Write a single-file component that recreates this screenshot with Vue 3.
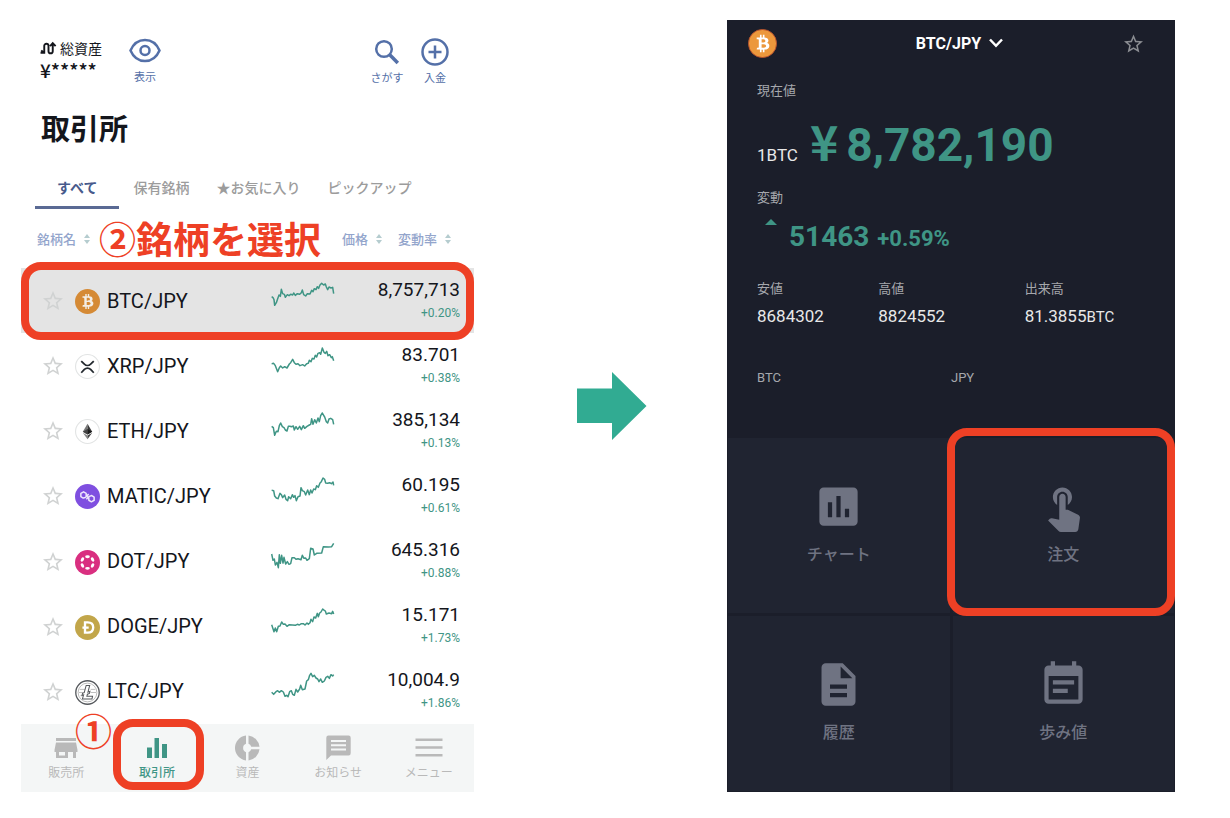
<script setup>
const tabs = ['すべて', '保有銘柄', '★お気に入り', 'ピックアップ']

const rows = [
  { coin: 'btc', pair: 'BTC/JPY', price: '8,757,713', change: '+0.20%', top: 45,
    line: '35,95 39,98 42,104 44,121 49,113 52,104 57,90 61,94 64,73 68,86 73,88 76,97 82,89 87,92 92,88 98,90 101,84 106,91 112,86 119,88 124,83 127,75 131,89 137,93 142,86 150,87 155,76 159,80 163,71 168,74 172,65 176,70 180,60 185,55 191,60 196,57 199,66 203,74 207,66 213,69 218,67 221,86' },
  { coin: 'xrp', pair: 'XRP/JPY', price: '83.701', change: '+0.38%', top: 241,
    line: '35,297 41,296 46,303 53,321 58,309 62,304 68,310 74,306 81,310 88,298 92,294 98,284 103,294 108,299 114,297 120,303 128,300 134,304 140,297 145,296 148,287 153,291 157,281 162,283 166,272 170,277 174,266 179,264 182,269 187,250 192,263 196,266 200,260 204,273 209,270 214,279 217,276 221,288' },
  { coin: 'eth', pair: 'ETH/JPY', price: '385,134', change: '+0.13%', top: 437,
    line: '35,486 40,490 44,513 49,501 54,502 58,484 62,476 67,487 72,490 76,497 81,500 85,486 90,486 94,487 100,485 103,497 108,487 113,495 119,486 124,496 130,484 134,492 141,486 148,482 152,480 155,463 159,480 164,466 169,476 174,461 178,472 182,454 187,446 191,453 194,458 199,472 203,476 207,464 212,462 218,466 221,480' },
  { coin: 'matic', pair: 'MATIC/JPY', price: '60.195', change: '+0.61%', top: 47,
    line: '35,93 41,94 44,110 49,116 54,118 60,102 64,106 68,115 74,107 78,120 83,124 86,112 92,118 97,106 101,114 105,109 109,124 114,112 120,110 123,85 127,94 133,97 137,107 143,92 148,106 152,92 156,101 161,89 166,91 170,79 175,84 180,71 184,67 189,56 194,60 197,71 203,72 209,70 214,73 219,68 221,78' },
  { coin: 'dot', pair: 'DOT/JPY', price: '645.316', change: '+0.88%', top: 243,
    line: '35,282 39,301 43,297 46,315 51,307 55,323 58,284 61,310 65,286 69,309 72,292 77,312 82,305 87,313 92,311 96,293 103,293 108,298 114,296 123,299 127,286 132,295 137,294 141,301 148,296 152,265 159,267 163,285 170,280 185,279 190,260 205,261 215,260 221,250' },
  { coin: 'doge', pair: 'DOGE/JPY', price: '15.171', change: '+1.73%', top: 439,
    line: '35,495 39,507 42,516 46,505 50,516 55,500 60,499 65,487 70,494 75,493 81,500 88,495 97,496 106,497 112,494 118,496 124,492 130,492 135,496 141,490 145,494 150,489 153,479 158,486 162,472 167,475 172,461 175,471 179,460 183,457 188,448 193,452 196,454 199,463 207,460 215,462 218,455 221,463' },
  { coin: 'ltc', pair: 'LTC/JPY', price: '10,004.9', change: '+1.86%', top: 635,
    line: '35,699 41,705 48,697 53,694 58,699 64,694 70,698 75,711 80,708 84,712 89,697 94,694 98,705 103,708 108,690 113,698 119,689 122,678 127,691 135,689 140,665 145,661 149,648 153,642 158,652 163,648 168,656 173,659 177,667 182,659 187,669 193,665 198,654 203,651 208,657 213,646 218,650 221,646' }
]

const nav = [
  { icon: 'shop', label: '販売所' },
  { icon: 'bars', label: '取引所' },
  { icon: 'pie', label: '資産' },
  { icon: 'news', label: 'お知らせ' },
  { icon: 'menu', label: 'メニュー' }
]

const stats = [
  { label: '安値', value: '8684302', unit: '' },
  { label: '高値', value: '8824552', unit: '' },
  { label: '出来高', value: '81.3855', unit: 'BTC' }
]

const tiles = [
  { label: 'チャート', d: 'M19 3H5c-1.1 0-2 .9-2 2v14c0 1.100.9 2 2 2h14c1.100 0 2-.9 2-2V5c0-1.100-.9-2-2-2zM9 17H7v-7h2v7zm4 0h-2V7h2v10zm4 0h-2v-4h2v4z' },
  { label: '注文', d: 'M9 11.240V7.500C9 6.120 10.120 5 11.500 5S14 6.120 14 7.500v3.740c1.210-.81 2-2.180 2-3.740C16 5.010 13.990 3 11.500 3S7 5.010 7 7.500c0 1.560.79 2.930 2 3.740zm9.840 4.630l-4.540-2.260c-.17-.07-.35-.11-.54-.11H13v-6c0-.83-.67-1.500-1.500-1.500S10 6.670 10 7.500v10.740l-3.430-.72c-.08-.01-.15-.03-.24-.03-.31 0-.59.13-.79.33l-.79.8 4.940 4.940c.27.27.65.44 1.060.44h6.790c.75 0 1.330-.55 1.440-1.280l.75-5.270c.01-.07.02-.14.02-.2 0-.62-.38-1.160-.91-1.380z' },
  { label: '履歴', d: 'M14 2H6c-1.100 0-1.990.9-1.990 2L4 20c0 1.100.89 2 1.990 2H18c1.100 0 2-.9 2-2V8l-6-6zm2 16H8v-2h8v2zm0-4H8v-2h8v2zm-3-5V3.500L18.500 9H13z' },
  { label: '歩み値', d: 'M17 10H7v2h10v-2zm2-7h-1V1h-2v2H8V1H6v2H5c-1.110 0-1.990.9-1.990 2L3 19c0 1.100.89 2 2 2h14c1.100 0 2-.9 2-2V5c0-1.100-.9-2-2-2zm0 16H5V8h14v11zm-5-5H7v2h7v-2z' }
]

const bitcoin = 'M23.189 14.02c.314-2.096-1.283-3.223-3.465-3.975l.708-2.84-1.728-.43-.69 2.765c-.454-.114-.92-.22-1.385-.326l.695-2.783L15.596 6l-.708 2.839c-.376-.086-.746-.17-1.104-.26l.002-.009-2.384-.595-.46 1.846s1.283.294 1.256.312c.7.175.826.638.805 1.006l-.806 3.235c.048.012.11.03.18.057l-.183-.045-1.13 4.532c-.086.212-.303.531-.793.41.018.025-1.256-.313-1.256-.313l-.858 1.978 2.25.561c.418.105.828.215 1.231.318l-.715 2.872 1.727.43.708-2.84c.472.127.93.245 1.378.357l-.706 2.828 1.728.43.715-2.866c2.948.558 5.164.333 6.097-2.333.752-2.146-.037-3.385-1.588-4.192 1.13-.26 1.98-1.003 2.207-2.538zm-3.95 5.538c-.533 2.147-4.148.986-5.32.695l.95-3.805c1.172.293 4.929.872 4.37 3.11zm.535-5.569c-.487 1.953-3.495.96-4.47.717l.86-3.45c.975.243 4.118.696 3.61 2.733z'
const star = 'M22 9.240l-7.190-.62L12 2 9.190 8.630 2 9.240l5.460 4.730L5.820 21 12 17.270 18.180 21l-1.630-7.030L22 9.240zM12 15.400l-3.760 2.270 1-4.280-3.320-2.880 4.380-.38L12 6.100l1.710 4.040 4.380.38-3.320 2.880 1 4.280L12 15.400z'
</script>

<template>
  <main class="page">
    <section class="phone market">
      <header class="top">
        <div class="assets">
          <p class="assets-label">
            <svg class="swap" viewBox="0 0 16 14" aria-hidden="true">
              <path d="M0.500 11h3.500V4.500a2 2 0 0 1 4 0v5a2 2 0 0 0 4 0V2.500M9.500 4.700l2.500-2.800 2.700 2.800M1.200 8.800L3.500 11" />
            </svg>
            <span>総資産</span>
          </p>
          <p class="assets-value">¥*****</p>
        </div>
        <button class="tool show" type="button">
          <svg viewBox="0 0 32 26" aria-hidden="true">
            <path d="M1.500 13C4.500 6 10 2.500 16 2.500S27.500 6 30.500 13C27.500 20 22 23.500 16 23.500S4.500 20 1.500 13z" />
            <circle cx="16" cy="13" r="4.500" />
          </svg>
          <span>表示</span>
        </button>
        <button class="tool" type="button">
          <svg viewBox="0 0 32 28" aria-hidden="true">
            <circle cx="13" cy="11" r="7.800" />
            <path d="M18.500 16.500l8.300 8.500" class="handle" />
          </svg>
          <span>さがす</span>
        </button>
        <button class="tool deposit" type="button">
          <svg viewBox="0 0 32 28" aria-hidden="true">
            <circle cx="16" cy="14" r="12.500" />
            <path d="M16 7.500v13M9.500 14h13" />
          </svg>
          <span>入金</span>
        </button>
      </header>

      <h1 class="title">取引所</h1>

      <div class="tabs" role="tablist">
        <button v-for="(t, i) in tabs" :key="t" class="tab" :class="{ active: i === 0 }" type="button" role="tab" :aria-selected="i === 0">{{ t }}</button>
      </div>

      <div class="list">
        <table>
          <colgroup>
            <col class="c-name" /><col class="c-line" /><col class="c-price" />
          </colgroup>
          <thead>
            <tr>
              <th class="h-name" colspan="2">
                <button class="sort" type="button">銘柄名
                  <svg viewBox="0 0 8 12" aria-hidden="true"><path d="M1 5l3-4 3 4zM1 7l3 4 3-4z" /></svg>
                </button>
              </th>
              <th>
                <div class="sorts">
                  <button class="sort" type="button">価格
                    <svg viewBox="0 0 8 12" aria-hidden="true"><path d="M1 5l3-4 3 4zM1 7l3 4 3-4z" /></svg>
                  </button>
                  <button class="sort" type="button">変動率
                    <svg viewBox="0 0 8 12" aria-hidden="true"><path d="M1 5l3-4 3 4zM1 7l3 4 3-4z" /></svg>
                  </button>
                </div>
              </th>
            </tr>
          </thead>
          <tbody>
            <tr v-for="(r, i) in rows" :key="r.pair" :class="{ selected: i === 0 }">
              <td>
                <div class="name">
                  <button class="fav" type="button" :aria-label="r.pair + ' お気に入り'">
                    <svg viewBox="2 2 20 19" aria-hidden="true"><path :d="star" /></svg>
                  </button>
                  <svg class="coin" viewBox="0 0 32 32" aria-hidden="true">
                    <g v-if="r.coin === 'btc'">
                      <circle cx="16" cy="16" r="16" fill="#d58a35" />
                      <path :d="bitcoin" fill="#f3eee6" transform="rotate(-14 16 16)" />
                    </g>
                    <g v-else-if="r.coin === 'xrp'" fill="none">
                      <circle cx="16" cy="16" r="15.300" stroke="#e2e4e4" stroke-width="1.400" />
                      <path d="M8 9l4 4c2.300 2.200 5.700 2.200 8 0l4-4M8 24l4-4.200c2.300-2.200 5.700-2.200 8 0l4 4.200" stroke="#23292f" stroke-width="2.300" />
                    </g>
                    <g v-else-if="r.coin === 'eth'">
                      <circle cx="16" cy="16" r="15.300" fill="#fff" stroke="#e2e4e4" stroke-width="1.400" />
                      <path d="M16 6l-6 10.200 6 3.500z" fill="#777" />
                      <path d="M16 6l6 10.200-6 3.500z" fill="#3a3a3a" />
                      <path d="M16 12.800l-6 3.400 6 3.500z" fill="#444" />
                      <path d="M16 12.800l6 3.400-6 3.500z" fill="#1c1c1c" />
                      <path d="M10 17.700l6 8.300v-4.800z" fill="#888" />
                      <path d="M22 17.700L16 26v-4.800z" fill="#444" />
                    </g>
                    <g v-else-if="r.coin === 'matic'">
                      <circle cx="16" cy="16" r="16" fill="#7f4fe0" />
                      <path d="M17.500 13L13 17.300L10.500 18L7.500 16.200V12L11 10L14.300 12V14.800L17.700 18.300V20.800L21 22.800L24.500 20.800V16.800L21.500 14.800L18.500 15.800L14.500 19.500" fill="none" stroke="#eee6fc" stroke-width="1.900" stroke-linejoin="round" />
                    </g>
                    <g v-else-if="r.coin === 'dot'">
                      <circle cx="16" cy="16" r="16" fill="#d92f80" />
                      <g fill="#fff">
                        <ellipse v-for="a in 6" :key="a" cx="16" cy="8.500" rx="3" ry="1.900" :transform="`rotate(${a * 60} 16 16)`" />
                      </g>
                    </g>
                    <g v-else-if="r.coin === 'doge'">
                      <circle cx="16" cy="16" r="16" fill="#c2a64a" />
                      <path d="M12.800 9.500h3.500c4.500 0 7 2.600 7 6.500s-2.500 6.600-7 6.600h-3.500zM9.500 16.200h8" fill="none" stroke="#fff" stroke-width="3" />
                    </g>
                    <g v-else fill="none" stroke="#55585c">
                      <circle cx="16" cy="16" r="15" stroke-width="1.700" />
                      <circle cx="16" cy="16" r="12" stroke="#aaa" stroke-width="1" />
                      <path d="M6 12h7M5 16h6M20 12h6M20 16h7M7 20h3" stroke="#bbb" stroke-width="1.200" />
                      <path d="M14.300 7h4.500l-2.200 8.500 2.500-1-.6 2.700-2.600 1-.7 2.600h7.300l-.8 3.500H9.500l1.500-5.300-2 .8.600-2.700 2.200-.9z" fill="#fff" stroke-width="1.300" />
                    </g>
                  </svg>
                  <span>{{ r.pair }}</span>
                </div>
              </td>
              <td>
                <svg class="spark" :viewBox="`33 ${r.top} 192 84`" aria-hidden="true"><polyline :points="r.line" /></svg>
              </td>
              <td class="quote">
                <span class="price">{{ r.price }}</span>
                <span class="change">{{ r.change }}</span>
              </td>
            </tr>
          </tbody>
        </table>
        <p class="note pick">②銘柄を選択</p>
        <div class="frame row-frame"></div>
      </div>

      <nav class="nav">
        <button v-for="(n, i) in nav" :key="n.icon" type="button" class="nav-item" :class="{ active: i === 1 }">
          <svg viewBox="0 0 32 28" aria-hidden="true">
            <path v-if="n.icon === 'shop'" d="M6 4h20v3H6zM6 8.500h20l1.500 7.500v2H26v6h-3v-6h-5v6H6v-6H4.500v-2zM9 18v3.500h6V18z" />
            <path v-else-if="n.icon === 'bars'" d="M6 13.500h5V24H6zM13.500 4h4.500v20h-4.500zM21 10h5v14h-5z" />
            <path v-else-if="n.icon === 'pie'" d="M15 1.500v8.300a4.500 4.500 0 0 0 0 8.400v8.300a12.600 12.600 0 0 1 0-25zM17.500 1.500A12.600 12.600 0 0 1 28.500 12.700h-8.300a4.500 4.500 0 0 0-2.700-2.900zM17.500 18.200a4.500 4.500 0 0 0 2.700-2.900h8.300a12.600 12.600 0 0 1-11 11.200z" />
            <path v-else-if="n.icon === 'news'" d="M6.500 1.500h20a2.200 2.200 0 0 1 2.200 2.200v15.500a2.200 2.200 0 0 1-2.200 2.200H9l-4.700 4.500V3.700a2.200 2.200 0 0 1 2.200-2.200zM9 6v2h15V6zM9 10.300v2h15v-2zM9 14.600v2h15v-2z" />
            <path v-else d="M2.500 4.500h27V7h-27zM2.500 12.200h27v2.600h-27zM2.500 20h27v2.600h-27z" />
          </svg>
          <span>{{ n.label }}</span>
        </button>
        <p class="note first">①</p>
        <div class="frame nav-frame"></div>
      </nav>
    </section>

    <div class="arrow">
      <svg viewBox="0 0 70 70" aria-hidden="true"><path d="M0 17.500h35V1l34.500 34L35 69V52H0z" /></svg>
    </div>

    <section class="phone detail">
      <header class="d-top">
        <svg class="d-coin" viewBox="0 0 32 32" aria-hidden="true">
          <circle cx="16" cy="16" r="15.500" fill="#ec983c" stroke="#b9502c" />
          <path :d="bitcoin" fill="#fff" transform="rotate(-14 16 16)" />
        </svg>
        <button class="d-pair" type="button">BTC/JPY
          <svg viewBox="0 0 14 10" aria-hidden="true"><path d="M1 1.500l6 6.300 6-6.300" /></svg>
        </button>
        <button class="d-fav" type="button" aria-label="お気に入り">
          <svg viewBox="2 2 20 19" aria-hidden="true"><path :d="star" /></svg>
        </button>
      </header>

      <div class="info">
        <p class="label">現在値</p>
        <p class="now"><span class="unit">1BTC</span><span class="yen">¥</span><span class="big">8,782,190</span></p>
        <p class="label">変動</p>
        <p class="move">
          <svg viewBox="0 0 12 6" aria-hidden="true"><path d="M0 6l6-6 6 6z" /></svg>
          <span class="diff">51463</span><span class="rate">+0.59%</span>
        </p>
        <dl class="stats">
          <div v-for="s in stats" :key="s.label">
            <dt class="label">{{ s.label }}</dt>
            <dd>{{ s.value }}<small v-if="s.unit">{{ s.unit }}</small></dd>
          </div>
        </dl>
        <div class="holdings">
          <p class="label">BTC</p>
          <p class="label">JPY</p>
        </div>
      </div>

      <div class="tiles">
        <button v-for="(t, i) in tiles" :key="t.label" class="tile" type="button">
          <svg viewBox="0 0 24 24" aria-hidden="true"><path :d="t.d" /></svg>
          <span>{{ t.label }}</span>
          <i v-if="i === 1" class="frame tile-frame"></i>
        </button>
      </div>
    </section>
  </main>
</template>

<style>
body {
  margin: 0;
  background: #fff;
}
</style>

<style scoped>
.page {
  display: grid;
  grid-template-columns: minmax(0, 453fr) minmax(80px, 253fr) minmax(0, 448fr);
  padding: 20px 55px 26px 21px;
  box-sizing: border-box;
  min-height: 100vh;
  font-family: Roboto, "Noto Sans CJK JP", sans-serif;
  color: #14161c;
}
p, h1, dl, dd {
  margin: 0;
}
button {
  background: none;
  border: 0;
  padding: 0;
  margin: 0;
  font: inherit;
  color: inherit;
  cursor: pointer;
}
svg {
  display: block;
  flex: none;
}
.phone {
  display: flex;
  flex-direction: column;
}
.top {
  display: flex;
  align-items: flex-start;
  padding: 17px 15px 0 19px;
}
.assets-label {
  display: flex;
  align-items: center;
  gap: 3px;
  height: 22px;
  font-size: 14px;
}
.swap {
  width: 17px;
  height: 15px;
  fill: none;
  stroke: #14161c;
  stroke-width: 1.800;
}
.assets-value {
  font-size: 19px;
  line-height: 22px;
  font-family: "Noto Sans CJK JP", sans-serif;
  font-weight: 500;
}
.tool {
  display: flex;
  flex-direction: column;
  align-items: center;
  width: 48px;
  color: #5470a8;
  font-size: 11px;
  line-height: 16px;
}
.tool svg {
  width: 32px;
  height: 30px;
  margin-bottom: 4px;
  fill: none;
  stroke: #5470a8;
  stroke-width: 2.500;
}
.tool .handle {
  stroke-width: 3.500;
}
.show {
  margin-left: 19px;
  margin-right: auto;
}
.show svg {
  height: 27px;
  margin-bottom: 6px;
}
.title {
  margin-top: 22px;
  padding-left: 20px;
  font-size: 29px;
  line-height: 42px;
  font-weight: 700;
}
.tabs {
  display: flex;
  gap: 27px;
  padding-left: 14px;
  margin-top: 20px;
  font-size: 14px;
  line-height: 35px;
  color: #9c9c9c;
  font-weight: 500;
}
.tab {
  white-space: nowrap;
  border-bottom: 3px solid transparent;
}
.tab.active {
  padding: 0 22px;
  margin-right: -13px;
  color: #475a8c;
  font-weight: 700;
  border-color: #5a6a94;
}
.list {
  position: relative;
  flex: 1;
}
table {
  width: 100%;
  height: 515px;
  border-collapse: collapse;
  table-layout: fixed;
}
.c-name {
  width: 250px;
}
.c-price {
  width: 132px;
}
th, td {
  padding: 0;
  text-align: left;
}
thead th {
  height: 59px;
  font-weight: 500;
  font-size: 13px;
  color: #93a5cc;
}
.h-name {
  padding-left: 16px;
}
.sort {
  display: flex;
  align-items: center;
  gap: 7px;
  white-space: nowrap;
}
.sort svg {
  width: 8px;
  height: 12px;
  fill: #b5cccf;
}
.sorts {
  display: flex;
  gap: 15px;
}
.selected {
  background: #e4e4e4;
}
.name {
  display: flex;
  align-items: center;
  font-size: 20px;
  white-space: nowrap;
  padding-left: 22px;
}
.fav svg {
  width: 20px;
  height: 19px;
  fill: #d0d2d2;
}
.coin {
  width: 25px;
  height: 25px;
  margin: 2px 7px 0 12px;
}
.spark {
  width: 64px;
  height: 28px;
  margin-bottom: 13px;
  fill: none;
  stroke: #3f9585;
  stroke-width: 4.500;
  stroke-linejoin: round;
}
.quote {
  padding-right: 14px;
  text-align: right;
}
.price, .change {
  display: block;
}
.price {
  font-size: 19px;
  line-height: 24px;
}
.change {
  font-size: 12px;
  line-height: 22px;
  color: #3f9585;
}
.note {
  position: absolute;
  color: #ee4025;
  font-size: 37px;
  line-height: 40px;
  font-weight: 700;
  white-space: nowrap;
}
.pick {
  left: 78px;
  top: 13px;
}
.frame {
  position: absolute;
  box-sizing: border-box;
  border: 8px solid #ee4025;
  border-radius: 20px;
  pointer-events: none;
}
.row-frame {
  left: 0;
  right: 0;
  top: 53px;
  height: 78px;
}
.nav {
  position: relative;
  display: grid;
  grid-template-columns: repeat(5, 1fr);
  height: 68px;
  background: #f4f6f6;
  color: #b9b9b9;
  font-size: 12px;
}
.nav-item {
  display: flex;
  flex-direction: column;
  align-items: center;
  padding-top: 10px;
  line-height: 18px;
}
.nav-item svg {
  width: 32px;
  height: 28px;
  fill: #b9b9b9;
  margin-bottom: 2px;
}
.nav-item.active {
  color: #3f9585;
  font-weight: 500;
}
.nav-item.active svg {
  fill: #3f9585;
}
.first {
  left: 54px;
  top: -10px;
}
.nav-frame {
  left: 92px;
  width: 91px;
  top: -5px;
  height: 71px;
}
.arrow {
  display: flex;
  justify-content: center;
  align-items: center;
}
.arrow svg {
  width: 70px;
  height: 70px;
  margin-left: 22px;
  fill: #31ab92;
}
.detail {
  background: #1b1e2a;
  color: #e8e8e8;
}
.d-top {
  display: grid;
  grid-template-columns: 1fr auto 1fr;
  align-items: center;
  padding: 8px 32px 0 21px;
  height: 30px;
}
.d-coin {
  width: 29px;
  height: 29px;
}
.d-pair {
  display: flex;
  align-items: center;
  gap: 8px;
  padding-left: 28px;
  font-size: 16px;
  font-weight: 700;
  color: #fff;
}
.d-pair svg {
  width: 14px;
  height: 10px;
  fill: none;
  stroke: #fff;
  stroke-width: 2.500;
}
.d-fav {
  justify-self: end;
}
.d-fav svg {
  width: 19px;
  height: 19px;
  fill: #8b8d92;
}
.info {
  flex: 1;
  padding: 23px 24px 0 30px;
}
.label {
  font-size: 13px;
  line-height: 20px;
  color: #a5a7ac;
}
.now {
  display: flex;
  align-items: baseline;
  margin: 8px 0 2px;
  line-height: 62px;
  white-space: nowrap;
}
.unit {
  font-size: 17px;
}
.yen, .big {
  color: #3f9585;
  font-weight: 700;
}
.yen {
  font-family: "Noto Sans CJK JP", sans-serif;
  font-size: 48px;
  margin-left: 12px;
}
.big {
  font-size: 46px;
  margin-left: 8px;
}
.move {
  display: flex;
  align-items: baseline;
  color: #3f9585;
  font-weight: 700;
  line-height: 36px;
  margin-top: 11px;
}
.move svg {
  align-self: flex-start;
  width: 12px;
  height: 6px;
  margin: 0 12px 0 8px;
  fill: #3f9585;
}
.diff {
  font-size: 28px;
}
.rate {
  font-size: 22px;
  margin-left: 8px;
}
.stats {
  display: grid;
  grid-template-columns: 121fr 146fr 126fr;
  margin-top: 22px;
}
.stats dd {
  font-size: 17px;
  line-height: 24px;
  margin-top: 5px;
}
.stats small {
  font-size: 15px;
}
.holdings {
  display: grid;
  grid-template-columns: 194fr 200fr;
  margin-top: 39px;
}
.tiles {
  display: grid;
  grid-template-columns: 1fr 1fr;
  grid-auto-rows: 175px;
  gap: 3px;
  padding: 1px;
}
.tile {
  position: relative;
  display: flex;
  flex-direction: column;
  align-items: center;
  justify-content: center;
  gap: 11px;
  padding-bottom: 4px;
  background: #202431;
  color: #6f7382;
  font-size: 16px;
  line-height: 24px;
  font-weight: 500;
}
.tile svg {
  width: 51px;
  height: 51px;
  fill: #6f7382;
}
.tile-frame {
  inset: -10px -1px -3px -6px;
}
</style>
